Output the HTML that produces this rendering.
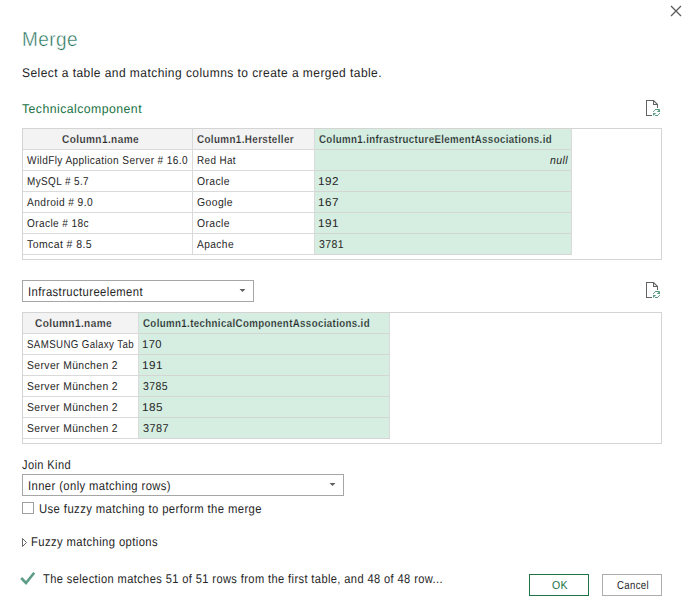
<!DOCTYPE html>
<html><head><meta charset="utf-8"><title>Merge</title>
<style>
html,body{margin:0;padding:0;background:#fff;}
#root{position:relative;width:688px;height:615px;overflow:hidden;background:#fff;}
svg{position:absolute;left:0;top:0;}
text{font-family:"Liberation Sans",sans-serif;white-space:pre;letter-spacing:0.45px;}
</style></head><body><div id="root">
<svg width="688" height="615" viewBox="0 0 688 615" shape-rendering="crispEdges">
<rect x="22" y="128" width="640" height="1" fill="#d4d4d4"/>
<rect x="22" y="259" width="640" height="1" fill="#d4d4d4"/>
<rect x="22" y="128" width="1" height="132" fill="#d4d4d4"/>
<rect x="661" y="128" width="1" height="132" fill="#d4d4d4"/>
<rect x="23" y="129" width="291" height="20" fill="#f3f3f3"/>
<rect x="315" y="129" width="256" height="125" fill="#d5eee1"/>
<rect x="23" y="149" width="291" height="1" fill="#dadada"/>
<rect x="314" y="149" width="257" height="1" fill="#d3d6d4"/>
<rect x="23" y="170" width="291" height="1" fill="#dadada"/>
<rect x="314" y="170" width="257" height="1" fill="#d3d6d4"/>
<rect x="23" y="191" width="291" height="1" fill="#dadada"/>
<rect x="314" y="191" width="257" height="1" fill="#d3d6d4"/>
<rect x="23" y="212" width="291" height="1" fill="#dadada"/>
<rect x="314" y="212" width="257" height="1" fill="#d3d6d4"/>
<rect x="23" y="233" width="291" height="1" fill="#dadada"/>
<rect x="314" y="233" width="257" height="1" fill="#d3d6d4"/>
<rect x="23" y="254" width="291" height="1" fill="#dadada"/>
<rect x="314" y="254" width="257" height="1" fill="#d3d6d4"/>
<rect x="192" y="129" width="1" height="126" fill="#dadada"/>
<rect x="314" y="129" width="1" height="126" fill="#dadada"/>
<rect x="571" y="129" width="1" height="126" fill="#dadada"/>
<rect x="22" y="312" width="640" height="1" fill="#d4d4d4"/>
<rect x="22" y="443" width="640" height="1" fill="#d4d4d4"/>
<rect x="22" y="312" width="1" height="132" fill="#d4d4d4"/>
<rect x="661" y="312" width="1" height="132" fill="#d4d4d4"/>
<rect x="23" y="313" width="115" height="20" fill="#f3f3f3"/>
<rect x="139" y="313" width="250" height="125" fill="#d5eee1"/>
<rect x="23" y="333" width="115" height="1" fill="#dadada"/>
<rect x="138" y="333" width="251" height="1" fill="#d3d6d4"/>
<rect x="23" y="354" width="115" height="1" fill="#dadada"/>
<rect x="138" y="354" width="251" height="1" fill="#d3d6d4"/>
<rect x="23" y="375" width="115" height="1" fill="#dadada"/>
<rect x="138" y="375" width="251" height="1" fill="#d3d6d4"/>
<rect x="23" y="396" width="115" height="1" fill="#dadada"/>
<rect x="138" y="396" width="251" height="1" fill="#d3d6d4"/>
<rect x="23" y="417" width="115" height="1" fill="#dadada"/>
<rect x="138" y="417" width="251" height="1" fill="#d3d6d4"/>
<rect x="23" y="438" width="115" height="1" fill="#dadada"/>
<rect x="138" y="438" width="251" height="1" fill="#d3d6d4"/>
<rect x="138" y="313" width="1" height="126" fill="#dadada"/>
<rect x="389" y="313" width="1" height="126" fill="#dadada"/>
<rect x="22" y="280" width="232" height="1" fill="#a6a6a6"/>
<rect x="22" y="301" width="232" height="1" fill="#a6a6a6"/>
<rect x="22" y="280" width="1" height="22" fill="#a6a6a6"/>
<rect x="253" y="280" width="1" height="22" fill="#a6a6a6"/>
<rect x="22" y="474" width="322" height="1" fill="#a6a6a6"/>
<rect x="22" y="495" width="322" height="1" fill="#a6a6a6"/>
<rect x="22" y="474" width="1" height="22" fill="#a6a6a6"/>
<rect x="343" y="474" width="1" height="22" fill="#a6a6a6"/>
<rect x="22" y="502" width="12" height="1" fill="#a0a0a0"/>
<rect x="22" y="513" width="12" height="1" fill="#a0a0a0"/>
<rect x="22" y="502" width="1" height="12" fill="#a0a0a0"/>
<rect x="33" y="502" width="1" height="12" fill="#a0a0a0"/>
<rect x="529" y="574" width="60" height="1" fill="#217346"/>
<rect x="529" y="595" width="60" height="1" fill="#217346"/>
<rect x="529" y="574" width="1" height="22" fill="#217346"/>
<rect x="588" y="574" width="1" height="22" fill="#217346"/>
<rect x="602" y="574" width="60" height="1" fill="#adadad"/>
<rect x="602" y="595" width="60" height="1" fill="#adadad"/>
<rect x="602" y="574" width="1" height="22" fill="#adadad"/>
<rect x="661" y="574" width="1" height="22" fill="#adadad"/>
<g shape-rendering="geometricPrecision">
<path d="M239.5 289h6l-3 3z" fill="#606060"/>
<path d="M329.5 483h6l-3 3z" fill="#606060"/>
<path d="M22.5 538.5 L26.5 542.5 L22.5 546.5 Z" fill="none" stroke="#666" stroke-width="1"/>
<path d="M21.2 578 L26 583 L34.2 572.8" fill="none" stroke="#5d9d88" stroke-width="2.6" stroke-linecap="butt"/>
<path d="M671 6 L681 16 M681 6 L671 16" stroke="#5a5a5a" stroke-width="1.25" fill="none"/>
<g transform="translate(646,100)"><g shape-rendering="crispEdges" fill="#636363"><rect x="0" y="0" width="8" height="1"/><rect x="0" y="0" width="1" height="16"/><rect x="0" y="15" width="6" height="1"/><rect x="7" y="0" width="1" height="5"/><rect x="7" y="4" width="5" height="1"/><rect x="11" y="4" width="1" height="4"/></g><path d="M7.6 0.6 L11.4 4.4" stroke="#636363" stroke-width="1.3" fill="none"/><g shape-rendering="crispEdges"><rect x="9" y="9" width="1" height="1" fill="#559c7e"/><rect x="10" y="9" width="1" height="1" fill="#559c7e"/><rect x="11" y="9" width="1" height="1" fill="#559c7e"/><rect x="12" y="9" width="1" height="1" fill="#559c7e"/><rect x="9" y="15" width="1" height="1" fill="#559c7e"/><rect x="10" y="15" width="1" height="1" fill="#559c7e"/><rect x="11" y="15" width="1" height="1" fill="#559c7e"/><rect x="7" y="11" width="1" height="1" fill="#6fa990"/><rect x="8" y="10" width="1" height="1" fill="#6fa990"/><rect x="12" y="14" width="1" height="1" fill="#6fa990"/><rect x="13" y="13" width="1" height="1" fill="#6fa990"/></g><path d="M14 8.8 V12 H10.8 Z M7 12.9 H10.2 L7 16.1 Z" fill="#559c7e"/></g>
<g transform="translate(646,282)"><g shape-rendering="crispEdges" fill="#636363"><rect x="0" y="0" width="8" height="1"/><rect x="0" y="0" width="1" height="16"/><rect x="0" y="15" width="6" height="1"/><rect x="7" y="0" width="1" height="5"/><rect x="7" y="4" width="5" height="1"/><rect x="11" y="4" width="1" height="4"/></g><path d="M7.6 0.6 L11.4 4.4" stroke="#636363" stroke-width="1.3" fill="none"/><g shape-rendering="crispEdges"><rect x="9" y="9" width="1" height="1" fill="#559c7e"/><rect x="10" y="9" width="1" height="1" fill="#559c7e"/><rect x="11" y="9" width="1" height="1" fill="#559c7e"/><rect x="12" y="9" width="1" height="1" fill="#559c7e"/><rect x="9" y="15" width="1" height="1" fill="#559c7e"/><rect x="10" y="15" width="1" height="1" fill="#559c7e"/><rect x="11" y="15" width="1" height="1" fill="#559c7e"/><rect x="7" y="11" width="1" height="1" fill="#6fa990"/><rect x="8" y="10" width="1" height="1" fill="#6fa990"/><rect x="12" y="14" width="1" height="1" fill="#6fa990"/><rect x="13" y="13" width="1" height="1" fill="#6fa990"/></g><path d="M14 8.8 V12 H10.8 Z M7 12.9 H10.2 L7 16.1 Z" fill="#559c7e"/></g>
</g>
<g text-rendering="geometricPrecision">
<text x="22.00" y="46" font-size="20.2" font-weight="400" font-style="normal" fill="#217256" textLength="56.00" lengthAdjust="spacingAndGlyphs" stroke="#ffffff" stroke-width="0.45" letter-spacing="0">Merge</text>
<text x="22.00" y="77" font-size="12.6" font-weight="400" font-style="normal" fill="#262626" textLength="360.00" lengthAdjust="spacingAndGlyphs">Select a table and matching columns to create a merged table.</text>
<text x="22.00" y="113" font-size="12.6" font-weight="400" font-style="normal" fill="#217346" textLength="120.00" lengthAdjust="spacingAndGlyphs">Technicalcomponent</text>
<text x="62.00" y="143" font-size="11.4" font-weight="700" font-style="normal" fill="#262626" textLength="77.00" lengthAdjust="spacingAndGlyphs" stroke="#f3f3f3" stroke-width="0.2">Column1.name</text>
<text x="197.00" y="143" font-size="11.4" font-weight="700" font-style="normal" fill="#262626" textLength="97.00" lengthAdjust="spacingAndGlyphs" stroke="#f3f3f3" stroke-width="0.2">Column1.Hersteller</text>
<text x="319.00" y="143" font-size="11.4" font-weight="700" font-style="normal" fill="#262626" textLength="233.00" lengthAdjust="spacingAndGlyphs" stroke="#d5eee1" stroke-width="0.2">Column1.infrastructureElementAssociations.id</text>
<text x="27.00" y="164" font-size="11.4" font-weight="400" font-style="normal" fill="#262626" textLength="161.00" lengthAdjust="spacingAndGlyphs">WildFly Application Server # 16.0</text>
<text x="197.00" y="164" font-size="11.4" font-weight="400" font-style="normal" fill="#262626" textLength="39.00" lengthAdjust="spacingAndGlyphs">Red Hat</text>
<text x="550.00" y="164" font-size="11.4" font-weight="400" font-style="italic" fill="#262626" textLength="18.00" lengthAdjust="spacingAndGlyphs">null</text>
<text x="27.00" y="185" font-size="11.4" font-weight="400" font-style="normal" fill="#262626" textLength="62.00" lengthAdjust="spacingAndGlyphs">MySQL # 5.7</text>
<text x="197.00" y="185" font-size="11.4" font-weight="400" font-style="normal" fill="#262626" textLength="33.00" lengthAdjust="spacingAndGlyphs">Oracle</text>
<text x="318.00" y="185" font-size="11.4" font-weight="400" font-style="normal" fill="#262626" textLength="21.00" lengthAdjust="spacingAndGlyphs">192</text>
<text x="27.00" y="206" font-size="11.4" font-weight="400" font-style="normal" fill="#262626" textLength="66.00" lengthAdjust="spacingAndGlyphs">Android # 9.0</text>
<text x="197.00" y="206" font-size="11.4" font-weight="400" font-style="normal" fill="#262626" textLength="36.00" lengthAdjust="spacingAndGlyphs">Google</text>
<text x="318.00" y="206" font-size="11.4" font-weight="400" font-style="normal" fill="#262626" textLength="21.00" lengthAdjust="spacingAndGlyphs">167</text>
<text x="27.00" y="227" font-size="11.4" font-weight="400" font-style="normal" fill="#262626" textLength="62.00" lengthAdjust="spacingAndGlyphs">Oracle # 18c</text>
<text x="197.00" y="227" font-size="11.4" font-weight="400" font-style="normal" fill="#262626" textLength="33.00" lengthAdjust="spacingAndGlyphs">Oracle</text>
<text x="318.00" y="227" font-size="11.4" font-weight="400" font-style="normal" fill="#262626" textLength="21.00" lengthAdjust="spacingAndGlyphs">191</text>
<text x="27.00" y="248" font-size="11.4" font-weight="400" font-style="normal" fill="#262626" textLength="65.00" lengthAdjust="spacingAndGlyphs">Tomcat # 8.5</text>
<text x="197.00" y="248" font-size="11.4" font-weight="400" font-style="normal" fill="#262626" textLength="37.00" lengthAdjust="spacingAndGlyphs">Apache</text>
<text x="319.00" y="248" font-size="11.4" font-weight="400" font-style="normal" fill="#262626" textLength="25.00" lengthAdjust="spacingAndGlyphs">3781</text>
<text x="28.00" y="296" font-size="12.6" font-weight="400" font-style="normal" fill="#262626" textLength="115.00" lengthAdjust="spacingAndGlyphs">Infrastructureelement</text>
<text x="35.00" y="327" font-size="11.4" font-weight="700" font-style="normal" fill="#262626" textLength="77.00" lengthAdjust="spacingAndGlyphs" stroke="#f3f3f3" stroke-width="0.2">Column1.name</text>
<text x="143.00" y="327" font-size="11.4" font-weight="700" font-style="normal" fill="#262626" textLength="227.00" lengthAdjust="spacingAndGlyphs" stroke="#d5eee1" stroke-width="0.2">Column1.technicalComponentAssociations.id</text>
<text x="27.00" y="348" font-size="11.4" font-weight="400" font-style="normal" fill="#262626" textLength="107.00" lengthAdjust="spacingAndGlyphs">SAMSUNG Galaxy Tab</text>
<text x="142.00" y="348" font-size="11.4" font-weight="400" font-style="normal" fill="#262626" textLength="20.00" lengthAdjust="spacingAndGlyphs">170</text>
<text x="27.00" y="369" font-size="11.4" font-weight="400" font-style="normal" fill="#262626" textLength="91.00" lengthAdjust="spacingAndGlyphs">Server München 2</text>
<text x="142.00" y="369" font-size="11.4" font-weight="400" font-style="normal" fill="#262626" textLength="21.00" lengthAdjust="spacingAndGlyphs">191</text>
<text x="27.00" y="390" font-size="11.4" font-weight="400" font-style="normal" fill="#262626" textLength="91.00" lengthAdjust="spacingAndGlyphs">Server München 2</text>
<text x="143.00" y="390" font-size="11.4" font-weight="400" font-style="normal" fill="#262626" textLength="25.00" lengthAdjust="spacingAndGlyphs">3785</text>
<text x="27.00" y="411" font-size="11.4" font-weight="400" font-style="normal" fill="#262626" textLength="91.00" lengthAdjust="spacingAndGlyphs">Server München 2</text>
<text x="142.00" y="411" font-size="11.4" font-weight="400" font-style="normal" fill="#262626" textLength="21.00" lengthAdjust="spacingAndGlyphs">185</text>
<text x="27.00" y="432" font-size="11.4" font-weight="400" font-style="normal" fill="#262626" textLength="91.00" lengthAdjust="spacingAndGlyphs">Server München 2</text>
<text x="143.00" y="432" font-size="11.4" font-weight="400" font-style="normal" fill="#262626" textLength="26.00" lengthAdjust="spacingAndGlyphs">3787</text>
<text x="22.00" y="469" font-size="12.6" font-weight="400" font-style="normal" fill="#262626" textLength="49.00" lengthAdjust="spacingAndGlyphs">Join Kind</text>
<text x="28.00" y="490" font-size="12.6" font-weight="400" font-style="normal" fill="#262626" textLength="143.00" lengthAdjust="spacingAndGlyphs">Inner (only matching rows)</text>
<text x="39.00" y="513" font-size="12.6" font-weight="400" font-style="normal" fill="#262626" textLength="223.00" lengthAdjust="spacingAndGlyphs">Use fuzzy matching to perform the merge</text>
<text x="31.00" y="546" font-size="12.6" font-weight="400" font-style="normal" fill="#262626" textLength="127.00" lengthAdjust="spacingAndGlyphs">Fuzzy matching options</text>
<text x="43.00" y="583" font-size="12.6" font-weight="400" font-style="normal" fill="#262626" textLength="400.00" lengthAdjust="spacingAndGlyphs">The selection matches 51 of 51 rows from the first table, and 48 of 48 row...</text>
<text x="552.00" y="589" font-size="11.6" font-weight="400" font-style="normal" fill="#217346" textLength="16.00" lengthAdjust="spacingAndGlyphs">OK</text>
<text x="617.00" y="589" font-size="11.6" font-weight="400" font-style="normal" fill="#262626" textLength="32.00" lengthAdjust="spacingAndGlyphs">Cancel</text>
</g>
</svg></div></body></html>
